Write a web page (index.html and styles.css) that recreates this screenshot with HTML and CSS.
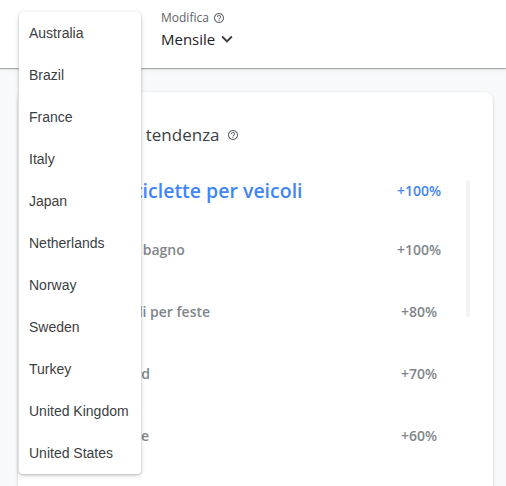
FILE: index.html
```html
<!DOCTYPE html>
<html lang="it">
<head>
<meta charset="utf-8">
<title>Argomenti di tendenza</title>
<link rel="stylesheet" href="styles.css">
</head>
<body>
<header class="header">
  <div class="control control-country">
    <div class="label">Paese</div>
    <div class="value">Italy</div>
  </div>
  <div class="control">
    <div class="label">Modifica
      <svg class="help" viewBox="0 0 24 24" width="12" height="12"><path fill="currentColor" d="M11 18h2v-2h-2v2zm1-16C6.480 2 2 6.48 2 12s4.48 10 10 10 10-4.48 10-10S17.52 2 12 2zm0 18c-4.41 0-8-3.59-8-8s3.59-8 8-8 8 3.59 8 8-3.59 8-8 8zm0-14c-2.21 0-4 1.79-4 4h2c0-1.1.9-2 2-2s2 .9 2 2c0 2-3 1.75-3 5h2c0-2.25 3-2.5 3-5 0-2.21-1.79-4-4-4z"/></svg>
    </div>
    <div class="value">Mensile
      <svg class="chev" viewBox="0 0 24 24" width="22" height="22"><path fill="currentColor" d="M16.59 8.59L12 13.17 7.41 8.59 6 10l6 6 6-6z"/></svg>
    </div>
  </div>
</header>

<main class="main">
  <section class="card">
    <h2 class="title">Argomenti di tendenza
      <svg class="help help-title" viewBox="0 0 24 24" width="12" height="12"><path fill="currentColor" d="M11 18h2v-2h-2v2zm1-16C6.48 2 2 6.48 2 12s4.48 10 10 10 10-4.48 10-10S17.52 2 12 2zm0 18c-4.41 0-8-3.59-8-8s3.59-8 8-8 8 3.59 8 8-3.59 8-8 8zm0-14c-2.21 0-4 1.79-4 4h2c0-1.1.9-2 2-2s2 .9 2 2c0 2-3 1.75-3 5h2c0-2.25 3-2.5 3-5 0-2.21-1.79-4-4-4z"/></svg>
    </h2>
    <div class="list">
      <div class="rows">
        <div class="row row-top"><span class="rank">1</span><span class="name">Portabiciclette per veicoli</span><span class="pct">+100%</span></div>
        <div class="row"><span class="rank">2</span><span class="name">Tende da bagno</span><span class="pct">+100%</span></div>
        <div class="row"><span class="rank">3</span><span class="name">Coriandoli per feste</span><span class="pct">+80%</span></div>
        <div class="row"><span class="rank">4</span><span class="name">Longboard</span><span class="pct">+70%</span></div>
        <div class="row"><span class="rank">5</span><span class="name">Zanzariere</span><span class="pct">+60%</span></div>
      </div>
      <div class="track"></div>
    </div>
  </section>
</main>

<ul class="menu">
  <li class="menu-item">Australia</li>
  <li class="menu-item">Brazil</li>
  <li class="menu-item">France</li>
  <li class="menu-item">Italy</li>
  <li class="menu-item">Japan</li>
  <li class="menu-item">Netherlands</li>
  <li class="menu-item">Norway</li>
  <li class="menu-item">Sweden</li>
  <li class="menu-item">Turkey</li>
  <li class="menu-item">United Kingdom</li>
  <li class="menu-item">United States</li>
</ul>
</body>
</html>
```

FILE: styles.css
```css
* { box-sizing: border-box; }

html, body {
  margin: 0;
  padding: 0;
}

body {
  background: #f8f9fa;
  font-family: "Open Sans", Roboto, Arial, sans-serif;
  color: #202124;
  height: 486px;
  overflow: hidden;
}

.header {
  position: relative;
  z-index: 1;
  height: 68px;
  background: #fff;
  display: flex;
  gap: 20px;
  padding: 10px 0 0 30px;
  box-shadow: 0 1px 1px rgba(60, 64, 67, 0.38), 0 2px 4px rgba(60, 64, 67, 0.08);
}

.control {
  display: flex;
  flex-direction: column;
  gap: 2px;
}

.control-country {
  width: 111px;
}

.label {
  font-size: 12px;
  line-height: 16px;
  color: #5f6368;
  display: flex;
  align-items: center;
  gap: 4px;
}

.value {
  font-size: 15px;
  line-height: 22px;
  color: #202124;
  display: flex;
  align-items: center;
  gap: 1px;
}

.help {
  color: #5f6368;
  display: block;
}

.chev {
  color: #3c4043;
  display: block;
}

.main {
  padding: 24px 13px 0 18px;
}

.card {
  background: #fff;
  border-radius: 8px;
  box-shadow: 0 1px 2px rgba(60, 64, 67, 0.2), 0 1px 3px 1px rgba(60, 64, 67, 0.08);
  padding: 32px 23px 40px 24px;
}

.title {
  margin: 0 0 0 -3px;
  font-size: 17px;
  line-height: 22px;
  font-weight: 400;
  color: #3c4043;
  display: flex;
  align-items: center;
  gap: 7px;
}

.list {
  margin-top: 16px;
  display: flex;
  align-items: flex-start;
}

.rows {
  flex: 1;
  display: flex;
  flex-direction: column;
}

.row {
  height: 62px;
  display: flex;
  align-items: center;
  font-size: 14px;
  font-weight: 600;
  color: #80868b;
}

.row-top {
  height: 56px;
  color: #4285f4;
}

.rank {
  width: 35px;
}

.row-top .rank {
  width: 22px;
  font-size: 19.5px;
}

.name {
  flex: 1;
  white-space: nowrap;
}

.row-top .name {
  font-size: 19.5px;
}

.pct {
  width: 60px;
  text-align: center;
}

.track {
  width: 4px;
  height: 137px;
  margin: 18px 0 0 17px;
  border-radius: 2px;
  background: #f1f3f4;
}

.menu {
  position: absolute;
  z-index: 5;
  left: 19px;
  top: 12px;
  width: 122px;
  margin: 0;
  padding: 0;
  list-style: none;
  background: #fff;
  border-radius: 4px;
  box-shadow: 0 1px 3px rgba(0, 0, 0, 0.25), 0 2px 6px rgba(0, 0, 0, 0.08);
}

.menu-item {
  height: 42px;
  padding-left: 10px;
  display: flex;
  align-items: center;
  font-family: "Liberation Sans", Arial, sans-serif;
  font-size: 14px;
  color: #3c4043;
  white-space: nowrap;
}
```
